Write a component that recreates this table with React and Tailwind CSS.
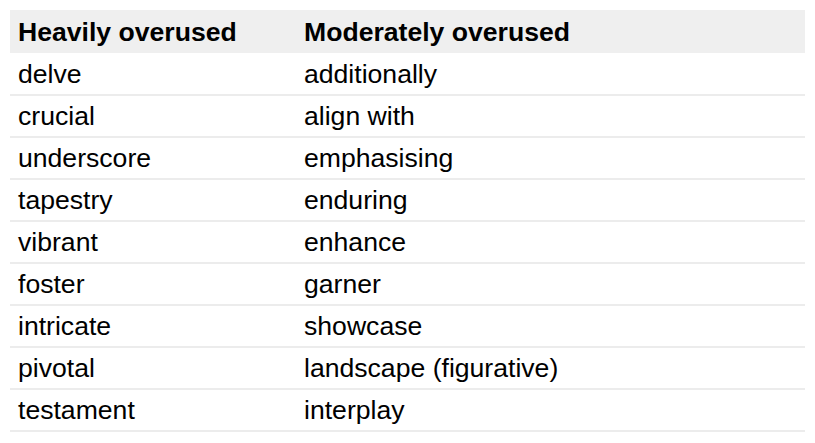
const rows = [
  ['delve', 'additionally'],
  ['crucial', 'align with'],
  ['underscore', 'emphasising'],
  ['tapestry', 'enduring'],
  ['vibrant', 'enhance'],
  ['foster', 'garner'],
  ['intricate', 'showcase'],
  ['pivotal', 'landscape (figurative)'],
  ['testament', 'interplay'],
]

export default function App() {
  return (
    <div className="min-h-screen bg-white p-[10px] font-['Liberation_Sans',Arial,sans-serif] text-black">
      <table className="w-[795px] border-collapse text-[26.6px] leading-[30px]">
        <thead>
          <tr className="bg-[#efefef]">
            <th className="h-[43px] w-[286px] px-2 text-left font-bold">Heavily overused</th>
            <th className="h-[43px] px-2 text-left font-bold">Moderately overused</th>
          </tr>
        </thead>
        <tbody>
          {rows.map(([a, b]) => (
            <tr key={a} className="border-b-2 border-[#ececec]">
              <td className="h-[42px] px-2">{a}</td>
              <td className="h-[42px] px-2">{b}</td>
            </tr>
          ))}
        </tbody>
      </table>
    </div>
  )
}
